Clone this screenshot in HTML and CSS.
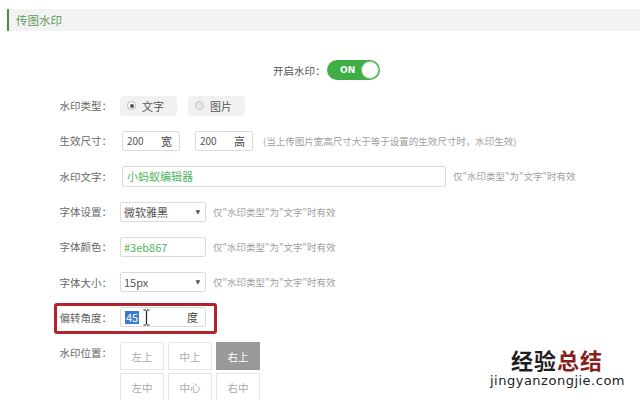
FILE: index.html
```html
<!DOCTYPE html>
<html lang="zh-CN">
<head>
<meta charset="utf-8">
<title>传图水印</title>
<link rel="stylesheet" href="styles.css">
</head>
<body>
<div class="page">
  <div class="section-title">传图水印</div>

  <div class="switch-row">
    <span class="switch-label">开启水印：</span>
    <span class="switch"><span class="switch-text">ON</span><span class="knob"></span></span>
  </div>

  <div class="form">
    <div class="row">
      <span class="label">水印类型：</span>
      <span class="radio-opt"><span class="radio checked"></span>文字</span>
      <span class="radio-opt second"><span class="radio"></span>图片</span>
    </div>

    <div class="row">
      <span class="label">生效尺寸：</span>
      <span class="box num"><span class="val">200</span><span class="unit">宽</span></span>
      <span class="box num second-num"><span class="val">200</span><span class="unit">高</span></span>
      <span class="hint hint-size">(当上传图片宽高尺寸大于等于设置的生效尺寸时，水印生效)</span>
    </div>

    <div class="row">
      <span class="label">水印文字：</span>
      <span class="box text-input"><span class="green">小蚂蚁编辑器</span></span>
      <span class="hint">仅"水印类型"为"文字"时有效</span>
    </div>

    <div class="row">
      <span class="label">字体设置：</span>
      <span class="box select"><span class="val">微软雅黑</span><span class="arrow">▼</span></span>
      <span class="hint">仅"水印类型"为"文字"时有效</span>
    </div>

    <div class="row">
      <span class="label">字体颜色：</span>
      <span class="box select"><span class="green">#3eb867</span></span>
      <span class="hint">仅"水印类型"为"文字"时有效</span>
    </div>

    <div class="row">
      <span class="label">字体大小：</span>
      <span class="box select"><span class="val">15px</span><span class="arrow">▼</span></span>
      <span class="hint">仅"水印类型"为"文字"时有效</span>
    </div>

    <div class="row angle-row">
      <span class="label">偏转角度：</span>
      <span class="box select angle">
        <span class="selected">45</span>
        <svg class="ibeam" width="7" height="17" viewBox="0 0 7 17"><path d="M0.5 1H3M4 1H6.5M3.5 1.5V15.5M0.5 16H3M4 16H6.5" stroke="#222" stroke-width="1.2" fill="none"/></svg>
        <span class="unit">度</span>
      </span>
      <span class="annot"></span>
    </div>

    <div class="row pos-row">
      <span class="label pos-label">水印位置：</span>
      <div class="pos-grid">
        <span class="pos">左上</span>
        <span class="pos">中上</span>
        <span class="pos active">右上</span>
        <span class="pos">左中</span>
        <span class="pos">中心</span>
        <span class="pos">右中</span>
      </div>
    </div>
  </div>

  <div class="watermark">
    <div class="wm-cn"><span class="wm-dark">经验</span><span class="wm-red">总结</span></div>
    <div class="wm-en">jingyanzongjie.com</div>
  </div>
</div>
</body>
</html>
```

FILE: styles.css
```css
html, body {
  margin: 0;
  padding: 0;
  background: #fff;
}
body {
  font-family: "Noto Sans CJK SC", "Noto Sans", sans-serif;
  color: #666;
  font-size: 10.5px;
}
.page {
  position: relative;
  width: 640px;
  height: 400px;
  overflow: hidden;
}
.section-title {
  margin: 9px 0 0 7px;
  height: 22px;
  line-height: 22px;
  background: #f3f3f3;
  border-left: 2px solid #4a8a4a;
  padding-left: 7px;
  font-size: 11.5px;
  color: #5e9a5e;
}
.switch-row {
  margin-top: 29px;
  height: 20px;
  display: flex;
  align-items: center;
  padding-left: 273px;
}
.switch-label {
  color: #555;
  width: 54px;
}
.switch {
  position: relative;
  width: 53px;
  height: 20px;
  border-radius: 10px;
  background: #3fae45;
  display: flex;
  align-items: center;
}
.switch-text {
  color: #fff;
  font-family: "DejaVu Sans", sans-serif;
  font-weight: bold;
  font-size: 9px;
  margin-left: 13px;
}
.knob {
  position: absolute;
  right: 1px;
  top: 1px;
  width: 16px;
  height: 16px;
  border-radius: 50%;
  background: #fff;
  border: 1px solid #7fcd83;
}
.form {
  margin-top: 8px;
}
.row {
  position: relative;
  height: 35.3px;
  display: flex;
  align-items: center;
}
.label {
  width: 112px;
  margin-right: 8px;
  text-align: right;
  flex: none;
  color: #666;
}
.radio-opt {
  box-sizing: border-box;
  width: 57px;
  height: 20px;
  border-radius: 4px;
  background: #f1f1f1;
  display: flex;
  align-items: center;
  padding-left: 7px;
  color: #555;
  font-size: 11px;
}
.radio-opt.second {
  margin-left: 11px;
}
.radio {
  box-sizing: border-box;
  width: 9px;
  height: 9px;
  border-radius: 50%;
  border: 1px solid #c4c4c4;
  background: #e6e6e6;
  margin-right: 6px;
  position: relative;
}
.radio.checked {
  background: #fff;
  border-color: #b8b8b8;
}
.radio.checked::after {
  content: "";
  position: absolute;
  left: 1.5px;
  top: 1.5px;
  width: 4px;
  height: 4px;
  border-radius: 50%;
  background: #555;
}
.box {
  box-sizing: border-box;
  height: 20px;
  border: 1px solid #dcdcdc;
  border-radius: 2px;
  background: #fff;
  display: flex;
  align-items: center;
  position: relative;
  color: #555;
  font-size: 11px;
  flex: none;
}
.num {
  width: 58px;
  margin-left: 2px;
  padding: 0 7px 0 4px;
  justify-content: space-between;
}
.num .val {
  font-size: 10px;
}
.second-num {
  margin-left: 15px;
}
.unit {
  color: #444;
  font-size: 11px;
}
.hint {
  font-size: 9.5px;
  color: #a0a0a0;
  margin-left: 7px;
  white-space: nowrap;
}
.hint-size {
  margin-left: 10px;
}
.text-input {
  width: 324px;
  height: 21px;
  margin-left: 2px;
  padding-left: 4px;
}
.green {
  color: #52b462;
}
.select {
  width: 86px;
  padding-left: 3px;
}
.select .arrow {
  position: absolute;
  right: 5px;
  top: 5px;
  font-size: 6px;
  color: #555;
  font-family: "DejaVu Sans", sans-serif;
}
.angle .selected {
  background: #3979d0;
  color: #fff;
  padding: 0 1px;
  margin-left: 1px;
  line-height: 13px;
  font-size: 11px;
}
.angle .ibeam {
  position: absolute;
  left: 22px;
  top: 1px;
}
.angle .unit {
  position: absolute;
  right: 7px;
}
.annot {
  position: absolute;
  left: 54px;
  top: 3px;
  width: 163px;
  height: 31px;
  box-sizing: border-box;
  border: 3px solid #b3222d;
  border-radius: 3px;
  pointer-events: none;
}
.pos-row {
  margin-top: 7px;
  height: auto;
  align-items: flex-start;
}
.pos-label {
  padding-top: 3px;
}
.pos-grid {
  display: grid;
  grid-template-columns: repeat(3, 44px);
  grid-auto-rows: 28px;
  column-gap: 4px;
  row-gap: 3px;
}
.pos {
  box-sizing: border-box;
  border: 1px solid #e6e6e6;
  display: flex;
  align-items: center;
  justify-content: center;
  color: #aaa;
  font-size: 10.5px;
}
.pos.active {
  background: #999;
  border-color: #999;
  color: #fff;
}
.watermark {
  position: absolute;
  left: 486px;
  top: 346px;
  width: 144px;
  height: 50px;
  background: #fff;
}
.wm-cn {
  margin-left: 25px;
  font-size: 22px;
  line-height: 26px;
  font-weight: bold;
  letter-spacing: 1px;
}
.wm-dark {
  color: #1e1e1e;
}
.wm-red {
  color: #8a1d1d;
}
.wm-en {
  margin-left: 4px;
  font-family: "DejaVu Sans", sans-serif;
  font-size: 13px;
  line-height: 18px;
  letter-spacing: 0.5px;
  color: #222;
}
```
